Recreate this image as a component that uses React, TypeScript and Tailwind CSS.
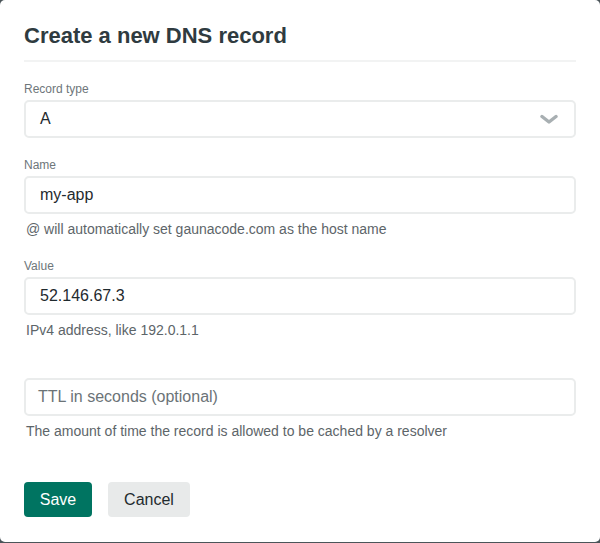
export default function App() {
  return (
    <div className="min-h-[543px] w-[600px] bg-[#4b5559]" style={{ fontFamily: '"Liberation Sans", Arial, sans-serif' }}>
      <div className="h-[542px] rounded-[5px] bg-white px-6 pt-[22px]">
        <h1 className="text-[22px] leading-[28px] font-bold text-[#2f3b40]">Create a new DNS record</h1>
        <div className="mt-[10px] h-[2px] bg-[#f2f3f3]" />

        <form className="mt-[18px]">
          <div>
            <label className="block text-xs leading-4 text-[#6e767a] mb-[3px] pt-px">Record type</label>
            <div className="flex h-[38px] items-center justify-between rounded-[5px] border-2 border-[#eaecec] pl-[14px] pr-[16px]">
              <span className="text-base text-[#1f2a2e]">A</span>
              <svg width="18" height="11" viewBox="0 0 18 11" className="text-[#a8afb2]">
                <path d="M2 2.5 L9 8 L16 2.5" fill="none" stroke="currentColor" strokeWidth="3.4" strokeLinecap="round" strokeLinejoin="round" />
              </svg>
            </div>
          </div>

          <div className="mt-[18px]">
            <label className="block text-xs leading-4 text-[#6e767a] mb-[3px] pt-px">Name</label>
            <div className="flex h-[38px] items-center rounded-[5px] border-2 border-[#eaecec] px-[14px] text-base text-[#1f2a2e]">my-app</div>
            <p className="mt-[5px] ml-[2px] text-sm leading-5 text-[#5d6569]">@ will automatically set gaunacode.com as the host name</p>
          </div>

          <div className="mt-[18px]">
            <label className="block text-xs leading-4 text-[#6e767a] mb-[3px] pt-px">Value</label>
            <div className="flex h-[38px] items-center rounded-[5px] border-2 border-[#eaecec] px-[14px] text-base text-[#1f2a2e]">52.146.67.3</div>
            <p className="mt-[5px] ml-[2px] text-sm leading-5 text-[#5d6569]">IPv4 address, like 192.0.1.1</p>
          </div>

          <div className="mt-[18px]">
            <div className="h-4 mb-[3px] pt-px box-content" />
            <div className="flex h-[38px] items-center rounded-[5px] border-2 border-[#eaecec] px-[12px] text-base text-[#6b7377]">TTL in seconds (optional)</div>
            <p className="mt-[5px] ml-[2px] text-sm leading-5 text-[#5d6569]">The amount of time the record is allowed to be cached by a resolver</p>
          </div>

          <div className="mt-[41px] flex gap-4">
            <button type="button" className="h-[35px] w-[68px] rounded-[4px] bg-[#007461] text-base text-white">Save</button>
            <button type="button" className="h-[35px] w-[82px] rounded-[4px] bg-[#e8eaea] text-base text-[#1f2a2e]">Cancel</button>
          </div>
        </form>
      </div>
    </div>
  );
}
